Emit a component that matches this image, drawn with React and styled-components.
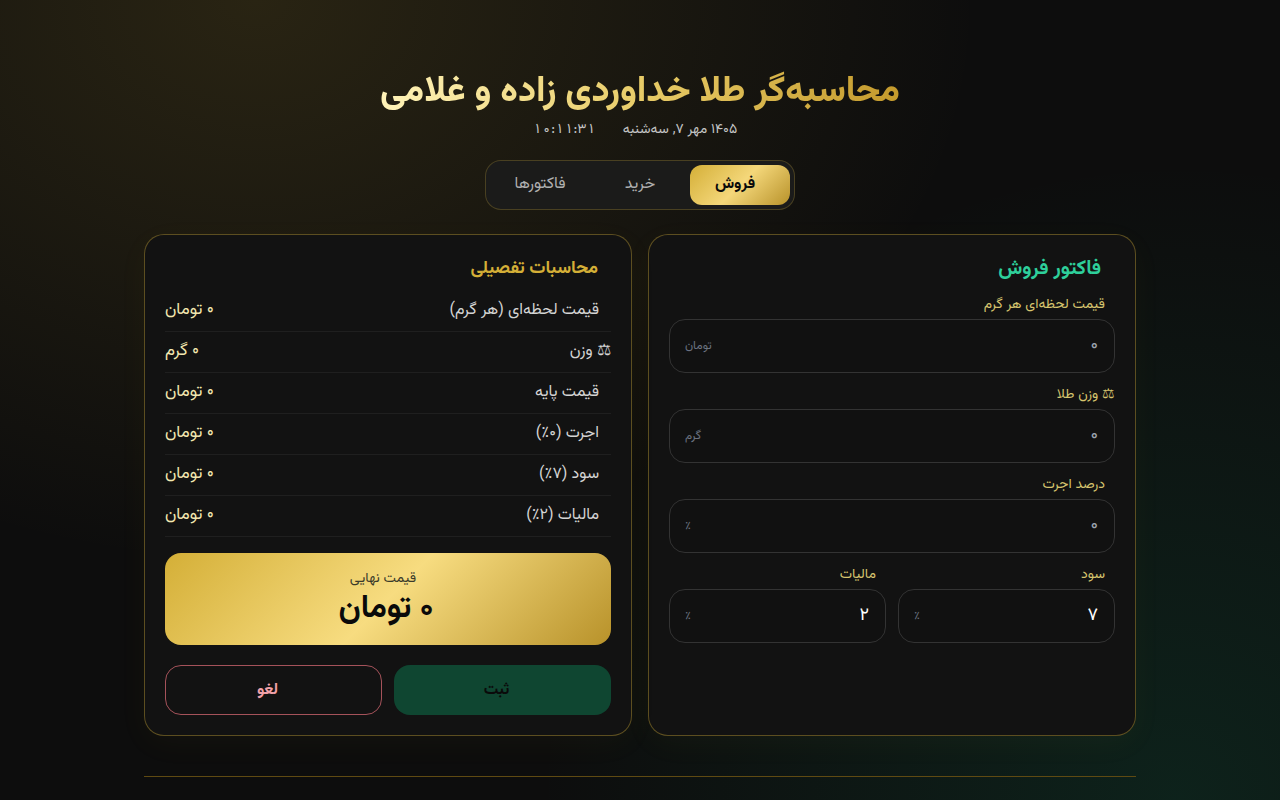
import React from 'react';
import styled, { createGlobalStyle } from "styled-components";

const rows = [
    { label: "قیمت لحظه‌ای (هر گرم)", value: "۰ تومان" },
    { label: "وزن", value: "۰ گرم", scale: true },
    { label: "قیمت پایه", value: "۰ تومان" },
    { label: "اجرت (۰٪)", value: "۰ تومان" },
    { label: "سود (۷٪)", value: "۰ تومان" },
    { label: "مالیات (۲٪)", value: "۰ تومان" },
];

function Field({ label, unit, value, scale }) {
    return (
        <FieldBox>
            <FieldLabel $flush={scale}>{scale ? "⚖ " : ""}{label}</FieldLabel>
            <InputWrap>
                <Input type="text" placeholder="۰" defaultValue={value} />
                <Unit>{unit}</Unit>
            </InputWrap>
        </FieldBox>
    );
}

function App() {
    return (
        <Page dir="rtl">
            <GlobalStyle />
            <Header>
                <Title>محاسبه‌گر طلا خداوردی زاده و غلامی</Title>
                <DateRow>
                    <DateText>۱۴۰۵ مهر ۷, سه‌شنبه</DateText>
                    <TimeText>۱۰:۱۱:۳۱</TimeText>
                </DateRow>
            </Header>
            <Tabs>
                <Tab $active>فروش</Tab>
                <Tab>خرید</Tab>
                <Tab>فاکتورها</Tab>
            </Tabs>
            <Panels>
                <Panel>
                    <InvoiceTitle>فاکتور فروش</InvoiceTitle>
                    <Field label="قیمت لحظه‌ای هر گرم" unit="تومان" />
                    <Field label="وزن طلا" unit="گرم" scale />
                    <Field label="درصد اجرت" unit="٪" />
                    <TwoCols>
                        <Field label="سود" unit="٪" value="۷" />
                        <Field label="مالیات" unit="٪" value="۲" />
                    </TwoCols>
                </Panel>
                <Panel>
                    <DetailTitle>محاسبات تفصیلی</DetailTitle>
                    <RowList>
                        {rows.map((row) => (
                            <Row key={row.label}>
                                <RowLabel $flush={row.scale}>{row.scale ? "⚖ " : ""}{row.label}</RowLabel>
                                <RowValue>{row.value}</RowValue>
                            </Row>
                        ))}
                    </RowList>
                    <FinalBox>
                        <FinalLabel>قیمت نهایی</FinalLabel>
                        <FinalValue>۰ تومان</FinalValue>
                    </FinalBox>
                    <Actions>
                        <SaveButton>ثبت</SaveButton>
                        <CancelButton>لغو</CancelButton>
                    </Actions>
                </Panel>
            </Panels>
            <Footer />
        </Page>
    );
}

const GlobalStyle = createGlobalStyle`
    * { box-sizing: border-box; }
    html, body {
        margin: 0;
        padding: 0;
        background: #0d0d0d;
        overflow: hidden;
    }
    body {
        font-family: Vazirmatn, "Noto Sans", sans-serif;
    }
`;

const Page = styled.div`
    min-height: 800px;
    padding: 66px 144px 0;
    background:
        radial-gradient(ellipse at 20% 0%, rgba(212, 175, 55, 0.14) 0%, transparent 50%),
        radial-gradient(ellipse 640px 640px at 92% 100%, rgba(16, 185, 129, 0.12) 0%, transparent 100%),
        #0d0d0d;
`;

const Header = styled.header`
    text-align: center;
    margin-bottom: 20px;
`;

const Title = styled.h1`
    width: fit-content;
    margin: 0 auto;
    font-size: 36px;
    line-height: 52px;
    font-weight: 800;
    background: linear-gradient(270deg, #c49a2c 0%, #e8cc68 50%, #fff3b8 100%);
    -webkit-background-clip: text;
    background-clip: text;
    color: transparent;
`;

const DateRow = styled.div`
    display: flex;
    justify-content: center;
    gap: 27px;
    margin-top: 2px;
    font-size: 14px;
    line-height: 20px;
    color: #c4c4c4;
`;

const DateText = styled.span`
    padding-right: 10px;
`;

const TimeText = styled.span`
    direction: ltr;
    letter-spacing: 1px;
    font-variant-numeric: tabular-nums;
`;

const Tabs = styled.div`
    display: flex;
    width: 310px;
    height: 50px;
    margin: 0 auto 24px;
    padding: 4px;
    background: #1b1b1a;
    border: 1px solid rgba(212, 175, 55, 0.25);
    border-radius: 16px;
`;

const Tab = styled.button`
    flex: 0 0 100px;
    padding: 0 ${(p) => (p.$active ? "10px" : "0")} 2px 0;
    border: none;
    border-radius: 12px;
    font-family: inherit;
    font-size: 16px;
    font-weight: ${(p) => (p.$active ? 700 : 400)};
    color: ${(p) => (p.$active ? "#0a0a0a" : "#b0b0b0")};
    background: ${(p) =>
        p.$active ? "linear-gradient(135deg, #d4af37 0%, #f4d77a 50%, #b8922a 100%)" : "transparent"};
`;

const Panels = styled.main`
    display: grid;
    grid-template-columns: 1fr 1fr;
    gap: 16px;
    height: 502px;
`;

const Panel = styled.section`
    display: flex;
    flex-direction: column;
    padding: 20px;
    background: #121212;
    border: 1px solid rgba(212, 175, 55, 0.38);
    border-radius: 20px;
    box-shadow: 0 8px 32px rgba(212, 175, 55, 0.04);
`;

const InvoiceTitle = styled.h2`
    margin: 0 14px 10px 0;
    font-size: 20px;
    line-height: 28px;
    font-weight: 700;
    color: #2ecf9b;
`;

const DetailTitle = styled.h2`
    margin: 0 13px 8px 0;
    font-size: 18px;
    line-height: 28px;
    font-weight: 700;
    color: #d4af37;
`;

const FieldBox = styled.div`
    margin-bottom: 10px;
`;

const FieldLabel = styled.label`
    display: block;
    margin-bottom: 2px;
    padding: 2px ${(p) => (p.$flush ? "0" : "10px")} 2px 0;
    font-size: 14px;
    line-height: 20px;
    color: #d6c46e;
`;

const InputWrap = styled.div`
    position: relative;
`;

const Input = styled.input`
    display: block;
    width: 100%;
    height: 54px;
    padding: 0 16px;
    font-family: inherit;
    font-size: 18px;
    color: #ffffff;
    background: #111111;
    border: 1px solid #333333;
    border-radius: 16px;
    outline: none;
    &::placeholder {
        color: #9ca3af;
    }
`;

const Unit = styled.span`
    position: absolute;
    left: 16px;
    top: 50%;
    transform: translateY(-50%);
    font-size: 12px;
    color: #6b7280;
`;

const TwoCols = styled.div`
    display: grid;
    grid-template-columns: 1fr 1fr;
    gap: 12px;
`;

const RowList = styled.div`
    display: flex;
    flex-direction: column;
`;

const Row = styled.div`
    display: flex;
    justify-content: space-between;
    align-items: center;
    height: 41px;
    padding-bottom: 2px;
    border-bottom: 1px solid #1f1f1f;
    font-size: 16px;
`;

const RowLabel = styled.span`
    padding-right: ${(p) => (p.$flush ? "0" : "12px")};
    color: #d4d4d4;
`;

const RowValue = styled.span`
    font-size: 16.8px;
    color: #f4e8b0;
`;

const FinalBox = styled.div`
    height: 92px;
    margin-top: 16px;
    padding-top: 14px;
    text-align: center;
    background: linear-gradient(135deg, #d4af37 0%, #f7dc80 50%, #b8922a 100%);
    border-radius: 16px;
`;

const FinalLabel = styled.div`
    padding: 2px 10px 0 0;
    font-size: 14px;
    line-height: 20px;
    color: #3a3a2a;
`;

const FinalValue = styled.div`
    padding-right: 4px;
    font-size: 32px;
    line-height: 40px;
    font-weight: 700;
    color: #0a0a0a;
`;

const Actions = styled.div`
    display: grid;
    grid-template-columns: 1fr 1fr;
    gap: 12px;
    margin-top: 20px;
`;

const SaveButton = styled.button`
    height: 50px;
    padding: 0 12px 0 0;
    border: none;
    border-radius: 16px;
    font-family: inherit;
    font-size: 16px;
    font-weight: 700;
    color: #0a0a0a;
    background: #0f4631;
`;

const CancelButton = styled.button`
    height: 50px;
    padding: 0 12px 0 0;
    border: 1px solid #a5525a;
    border-radius: 16px;
    font-family: inherit;
    font-size: 16px;
    font-weight: 700;
    color: #f0a0a8;
    background: transparent;
`;

const Footer = styled.footer`
    margin-top: 40px;
    height: 24px;
    border-top: 1px solid #5f4a12;
`;

export default App;
